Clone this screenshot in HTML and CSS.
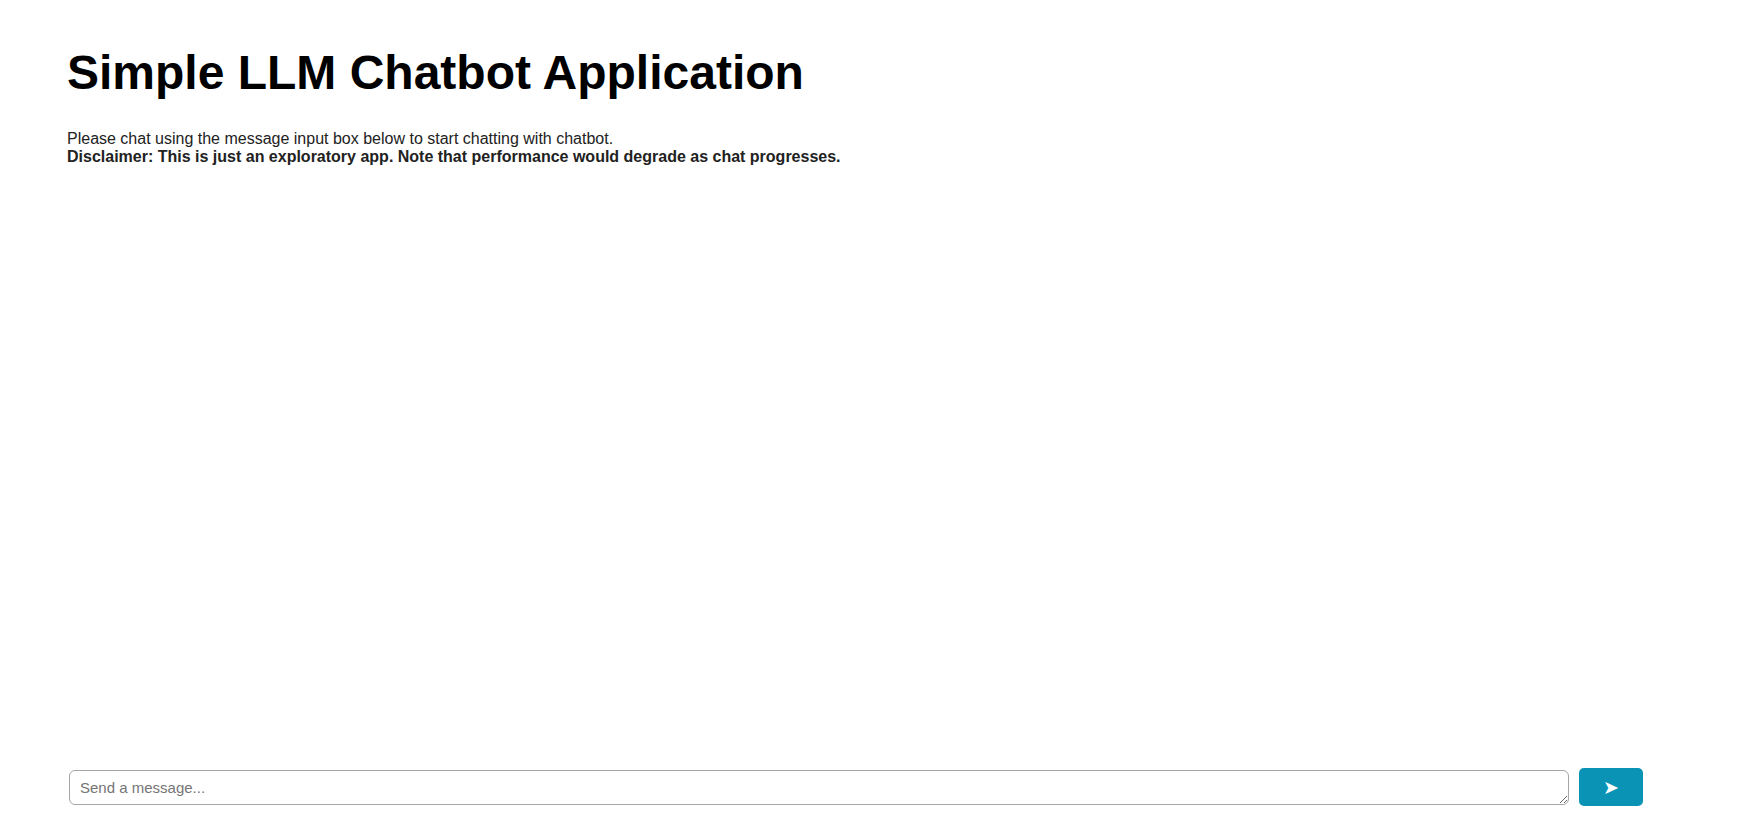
FILE: index.html
```html
<!DOCTYPE html>
<html lang="en">
<head>
<meta charset="utf-8">
<title>Simple LLM Chatbot Application</title>
<link rel="stylesheet" href="styles.css">
</head>
<body>
<div class="app">
  <header class="intro">
    <h1 class="title">Simple LLM Chatbot Application</h1>
    <p class="desc">Please chat using the message input box below to start chatting with chatbot.<br><strong class="disclaimer">Disclaimer: This is just an exploratory app. Note that performance would degrade as chat progresses.</strong></p>
  </header>
  <main class="chat"></main>
  <form class="composer">
    <textarea class="input" rows="1" placeholder="Send a message..."></textarea>
    <button class="send" type="button">&#10148;</button>
  </form>
</div>
</body>
</html>
```

FILE: styles.css
```css
html, body {
  margin: 0;
  padding: 0;
  height: 100%;
  background: #ffffff;
}
body {
  font-family: "Liberation Sans", Arial, sans-serif;
}
.app {
  box-sizing: border-box;
  height: 100%;
  display: flex;
  flex-direction: column;
  padding: 45px 104px 24px 67px;
}
.intro {
  flex: none;
}
.title {
  margin: 0;
  font-size: 48px;
  font-weight: bold;
  color: #000;
  line-height: normal;
}
.desc {
  margin: 30px 0 0 0;
  font-size: 16px;
  line-height: 18px;
  color: #222;
}
.disclaimer {
  color: #222;
}
.chat {
  flex: 1;
}
.composer {
  flex: none;
  display: flex;
  align-items: center;
  gap: 10px;
  padding-left: 2px;
}
.input {
  flex: 1;
  box-sizing: border-box;
  height: 35px;
  padding: 8px 8px 8px 10px;
  border: 1px solid #a6a6a6;
  border-radius: 6px;
  font-family: "Liberation Sans", Arial, sans-serif;
  font-size: 15px;
  line-height: 17px;
  color: #222;
}
.input::placeholder {
  color: #757575;
}
.send {
  flex: none;
  width: 64px;
  height: 38px;
  border: none;
  border-radius: 5px;
  background: #0a93b5;
  color: #fff;
  font-size: 19px;
  line-height: 1;
  font-family: "DejaVu Sans", sans-serif;
  padding: 0;
}
```
